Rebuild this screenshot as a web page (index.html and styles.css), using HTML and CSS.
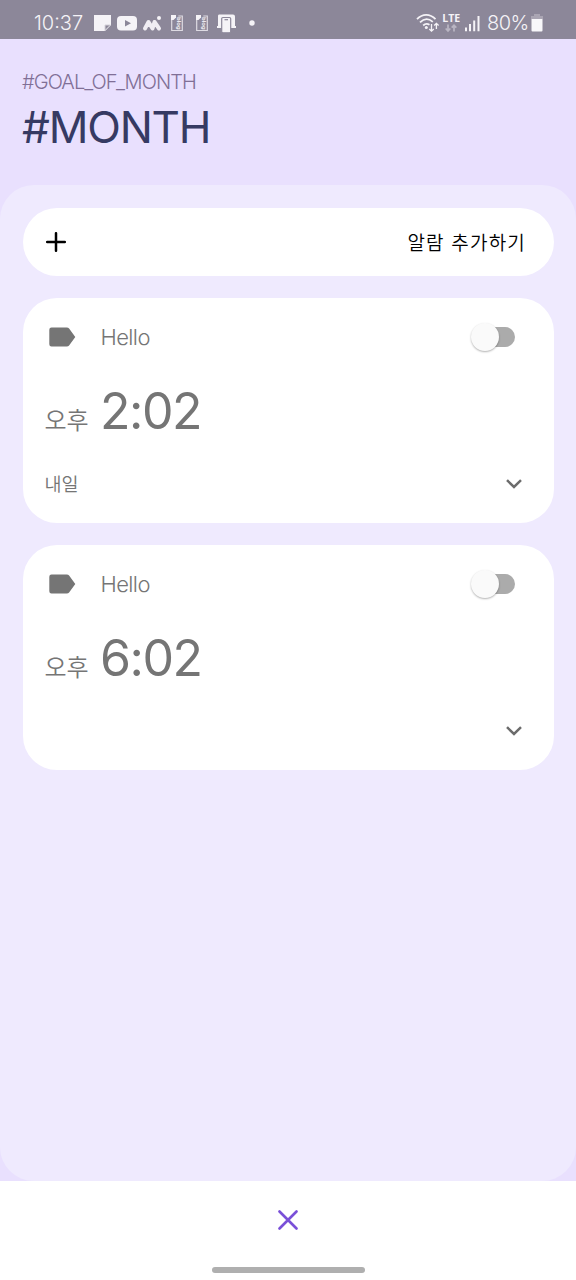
FILE: index.html
```html
<!DOCTYPE html>
<html lang="ko">
<head>
<meta charset="utf-8">
<title>#MONTH</title>
<link rel="stylesheet" href="styles.css">
</head>
<body>
<div class="screen">
  <div class="status">
    <span class="clock">10:37</span>
    <svg class="notifications" width="166" height="22" viewBox="0 0 166 22" fill="#f5f3f7">
      <path d="M1 3h17v10l-6 6H1z"/><path d="M12 13h5.500l-5.500 5.500z" fill="#8c8799" stroke="#d5d2da"/>
      <rect x="24" y="4" width="20" height="14.500" rx="4"/><path d="M32 8l6 3.200-6 3.300z" fill="#8c8799"/>
      <path d="M52 16.500l3.500-6.500 4 6.500 2-6.500 4.500 6.500" fill="none" stroke="#f0edf3" stroke-width="4" stroke-linejoin="round" stroke-linecap="round"/><circle cx="66" cy="6" r="2"/>
      <g id="blog"><path d="M78.700 8v10.500h10.600V4h-4" fill="none" stroke="#dedbe3" stroke-width="1.200"/><path d="M78 3h5v2.500l-2.500 2.500H78z"/><text class="blog" transform="translate(84 5) rotate(90)">blog</text></g>
      <use href="#blog" x="25"/>
      <path d="M126 2.500h14a2 2 0 0 1 2 2V14h1v2h-19v-2h1V4a1.500 1.500 0 0 1 1-1.500z"/><rect x="128.700" y="5.500" width="9" height="15.300" rx="1.200" stroke="#8c8799" stroke-width="1.200"/><path d="M131.500 7.700h3.500" stroke="#8c8799" stroke-width="1.200"/>
      <circle cx="159" cy="11" r="2.700"/>
    </svg>
    <svg class="signals" width="68" height="22" viewBox="0 0 68 22" fill="none" stroke="#f5f3f7">
      <path d="M1 7.200C6.500 1.500 14 1.500 19.500 7.200M4 10.400c4-4 8.800-4 12.800-.5M7.200 13.500c2-2 4.300-2 6.300-.7" stroke-width="1.800"/>
      <circle cx="10.300" cy="15.500" r="1.500" fill="#f5f3f7" stroke="none"/>
      <path d="M15.500 12v7M13.300 17l2.200 2.200 2.300-2.200M20.400 17v-5.500M18.200 13.500l2.200-2.200 2.200 2.200" stroke-width="1.300"/>
      <path d="M32 12.500v6.500M29.700 16.500l2.300 2.500 2.300-2.500M38 19.500v-6M35.700 15.700l2.300-2.500 2.300 2.500" stroke="#bab6c3" stroke-width="1.700"/>
      <path d="M50 15.500v3.700M54 12v7.200M58.200 8.500v10.700M62.500 4v15.200" stroke-width="2"/>
      <text x="26.300" y="10.400" class="lte">LTE</text>
    </svg>
    <span class="percent">80%</span>
    <svg class="battery" width="12" height="18" viewBox="0 0 12 18"><path d="M3 0h6v2h3v3H0V2h3z" fill="#aaa5b3"/><path d="M.5 5h11v11.500a1 1 0 0 1-1 1h-9a1 1 0 0 1-1-1z" fill="#f8f7fa"/></svg>
  </div>
  <header class="header">
    <p class="goal">#GOAL_OF_MONTH</p>
    <h1 class="month">#MONTH</h1>
  </header>
  <main class="panel">
    <button class="add">
      <svg width="20" height="20" viewBox="0 0 20 20"><path d="M10 1.200v17.600M1.200 10h17.600" stroke="#000" stroke-width="2.500" stroke-linecap="round"/></svg>
      <span>알람 추가하기</span>
    </button>
    <section class="card">
      <div class="label-row">
        <svg class="tag" width="27" height="20" viewBox="0 0 27 20"><path d="M2.500.5h15.300q1.500 0 2.300 1.100L26.300 10l-6.200 8.400q-.8 1.100-2.300 1.100H2.500Q.3 19.500.3 17.300V2.700Q.3.500 2.500.5z" fill="#757575"/></svg>
        <span class="name">Hello</span>
        <span class="switch"><span class="track"></span><span class="thumb"></span></span>
      </div>
      <div class="time-row"><span class="meridiem">오후</span><span class="time">2:02</span></div>
      <div class="day-row"><span class="day">내일</span><svg width="18" height="12" viewBox="0 0 18 12"><path d="M2 2.200l7 6.800 7-6.800" fill="none" stroke="#6c6c6c" stroke-width="2.500"/></svg></div>
    </section>
    <section class="card">
      <div class="label-row">
        <svg class="tag" width="27" height="20" viewBox="0 0 27 20"><path d="M2.500.5h15.300q1.500 0 2.300 1.100L26.300 10l-6.200 8.400q-.8 1.100-2.300 1.100H2.500Q.3 19.500.3 17.300V2.700Q.3.500 2.500.5z" fill="#757575"/></svg>
        <span class="name">Hello</span>
        <span class="switch"><span class="track"></span><span class="thumb"></span></span>
      </div>
      <div class="time-row"><span class="meridiem">오후</span><span class="time">6:02</span></div>
      <div class="day-row"><span class="day"></span><svg width="18" height="12" viewBox="0 0 18 12"><path d="M2 2.200l7 6.800 7-6.800" fill="none" stroke="#6c6c6c" stroke-width="2.500"/></svg></div>
    </section>
  </main>
  <footer class="footer">
    <svg width="20" height="20" viewBox="0 0 20 20"><path d="M1.500 1.500l17 17M18.500 1.500l-17 17" stroke="#7a50d8" stroke-width="2.600" stroke-linecap="round"/></svg>
    <div class="home"></div>
  </footer>
</div>
</body>
</html>
```
FILE: styles.css
```css
* { box-sizing: border-box; }
body { margin: 0; font-family: Inter, "Noto Sans CJK KR", sans-serif; color: #757575; }
.screen { width: 576px; height: 1280px; display: flex; flex-direction: column; background: #e9e0fe; overflow: hidden; }
.status { height: 39px; background: #8c8799; color: #f5f3f7; display: flex; align-items: center; padding: 7px 33px 0 34px; font-size: 20px; font-weight: 350; line-height: 32px; flex: none; }
.clock { width: 59px; }
.signals { margin-left: auto; }
.lte { font: 700 10.500px "Open Sans", sans-serif; fill: #f5f3f7; stroke: none; }
.blog { font: 700 6px "Liberation Sans", sans-serif; fill: #f5f3f7; }
.percent { margin-left: 3px; width: 43px; white-space: nowrap; letter-spacing: -.6px; }
.battery { margin-left: 1px; }
.header { height: 146px; padding: 31px 22px 0; flex: none; }
.goal { margin: 0; font-size: 20px; line-height: 24px; font-weight: 350; letter-spacing: -.93px; color: #806f96; }
.month { margin: 6px 0 0; font-size: 44px; line-height: 54px; font-weight: 370; letter-spacing: -1.200px; color: #363a63; }
.panel { height: 996px; flex: none; border-radius: 34px; background: #efeafe; padding: 23px 22.500px 0; display: flex; flex-direction: column; gap: 22.500px; }
.add { height: 67.500px; border: 0; border-radius: 34px; background: #fff; color: #000; display: flex; align-items: center; justify-content: space-between; padding: 0 27.500px 0 23.500px; font: 350 19px "Noto Sans CJK KR", sans-serif; letter-spacing: 1.200px; }
.card { height: 224.500px; border-radius: 34px; background: #fff; padding: 24px 30.500px 0 22px; }
.label-row { height: 30px; display: flex; align-items: center; }
.tag { margin-left: 4px; }
.name { margin-left: 25px; font-size: 22px; font-weight: 350; letter-spacing: -.6px; }
.switch { margin: 0 8.500px 0 auto; width: 44px; height: 30px; position: relative; display: flex; align-items: center; justify-content: flex-end; }
.track { width: 36px; height: 20px; border-radius: 10px; background: #ababab; }
.thumb { position: absolute; left: 0; top: 1px; width: 28px; height: 28px; border-radius: 50%; background: #fafafa; box-shadow: 0 1px 2px rgba(0,0,0,.3); }
.time-row { height: 60px; margin-top: 29px; display: flex; align-items: baseline; }
.meridiem { width: 55.500px; font: 350 24px/34px "Noto Sans CJK KR", sans-serif; }
.time { font-size: 50px; line-height: 60px; letter-spacing: -1.500px; }
.day-row { height: 30px; margin-top: 28px; display: flex; align-items: center; justify-content: space-between; font: 350 18.500px "Noto Sans CJK KR", sans-serif; }
.day { margin-top: -2px; }
.footer { flex: 1; background: #fff; display: flex; flex-direction: column; align-items: center; justify-content: space-between; padding: 29px 0 7px; }
.home { width: 153px; height: 6px; border-radius: 3px; background: #afafaf; }
```
